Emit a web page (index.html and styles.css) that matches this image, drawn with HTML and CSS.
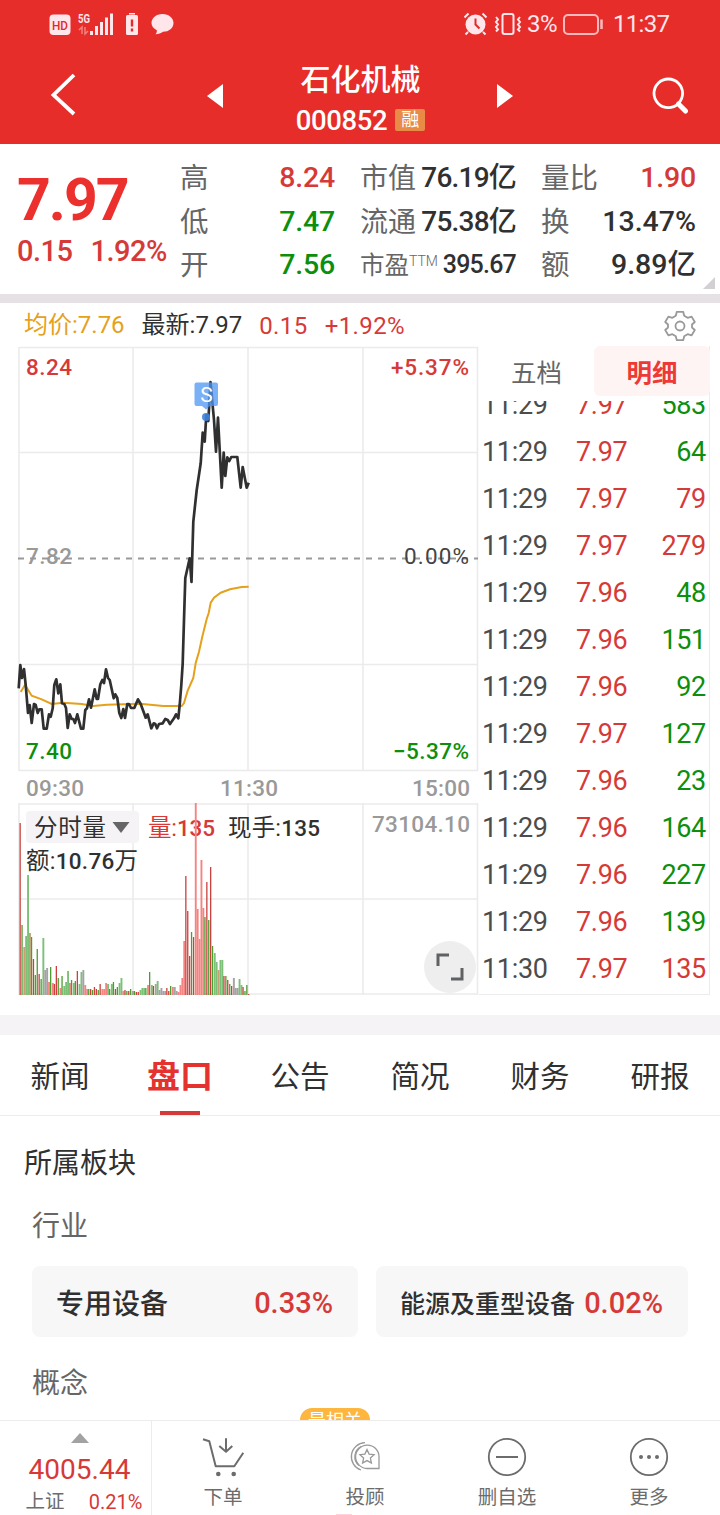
FILE: index.html
```html
<!DOCTYPE html>
<html lang="zh-CN">
<head>
  <meta charset="UTF-8">
  <meta name="viewport" content="width=device-width, initial-scale=1.0">
  <title>石化机械 000852</title>
  <link rel="stylesheet" href="styles.css">
</head>
<body>
  <header class="header">
    <div class="status-bar">
      <svg width="126" height="24" viewBox="49 12 126 24">
        <rect x="49.5" y="14.500" width="21" height="20.500" rx="4" fill="#ffe6ea"/>
        <text x="52" y="30" class="hd" textLength="16" lengthAdjust="spacingAndGlyphs">HD</text>
        <text x="78" y="23" class="five-g" textLength="12" lengthAdjust="spacingAndGlyphs">5G</text>
        <path d="M79 30l3-3v7M85 27v7l3-3" fill="none" stroke="#f2817f" stroke-width="1.500"/>
        <path d="M91.500 31v4M96.500 26v9M101.500 22v13M106.500 17.500v17.500M111.500 13.500v21.500" stroke="#ffe6ea" stroke-width="3"/>
        <path d="M129 13h6v1.500h-6z" fill="#ffe6ea"/>
        <rect x="126" y="15" width="12" height="20" rx="1.500" fill="#ffe6ea"/>
        <path d="M132 19.500v7M132 28.500v3" stroke="#e02b2a" stroke-width="2.400"/>
        <path d="M162.500 14c6.500 0 11 4 11 9s-4.500 8.800-10.500 8.800c-2 1.500-4.500 2.400-7.500 2.400 1.200-1.200 1.500-2.500 1.300-4-3.200-1.700-5.300-4-5.300-7.200 0-5 4.500-9 11-9z" fill="#ffe6ea"/>
      </svg>
      <div class="status-right">
        <svg width="58" height="24" viewBox="464 12 58 24" fill="none" stroke="#ffe6ea">
          <circle cx="475.500" cy="24.500" r="10" fill="#ffe6ea" stroke="none"/>
          <path d="M464.500 17.500l4-4M486.500 17.500l-4-4M468 32l-2.500 2.500M483 32l2.500 2.500" stroke-width="2"/>
          <path d="M475.500 18.500v6l4 4" stroke="#e02b2a" stroke-width="2"/>
          <rect x="502.500" y="14" width="11" height="20" rx="2" stroke-width="2"/>
          <path d="M496 17l2 2.500-2 2.500 2 2.500-2 2.500 2 2.500-2 2M520 17l-2 2.500 2 2.500-2 2.500 2 2.500-2 2.500 2 2" stroke-width="2"/>
        </svg>
        <span class="percent">3%</span>
        <svg width="41" height="24" viewBox="563 12 41 24">
          <rect x="564" y="15" width="34" height="19" rx="4" fill="none" stroke="#ffb9bc" stroke-width="2"/>
          <path d="M601.500 19.500v9.500" stroke="#ffb9bc" stroke-width="2.500"/>
        </svg>
        <span class="clock">11:37</span>
      </div>
    </div>
    <div class="title-bar">
      <svg class="back" width="28" height="46" viewBox="50 72 28 46"><path d="M74 75L53.500 95 74 114" fill="none" stroke="#fff" stroke-width="3.800"/></svg>
      <svg width="16" height="24" viewBox="0 0 16 24"><path d="M0 12L16 0v24z" fill="#fff"/></svg>
      <div class="stock">
        <div class="stock-name">石化机械</div>
        <div class="stock-code">000852<span class="tag">融</span></div>
      </div>
      <svg class="next" width="16" height="24" viewBox="0 0 16 24"><path d="M16 12L0 0v24z" fill="#fff"/></svg>
      <svg width="36" height="38" viewBox="652 77 36 38" fill="none" stroke="#fff">
        <circle cx="668.300" cy="93.300" r="14.300" stroke-width="2.800"/>
        <path d="M678.500 104l7 7" stroke-width="5" stroke-linecap="round"/>
      </svg>
    </div>
  </header>

  <section class="quote">
    <div>
      <div class="price">7.97</div>
      <div class="change"><span>0.15</span><span>1.92%</span></div>
    </div>
    <dl class="stats">
      <div><dt>高</dt><dd class="up">8.24</dd></div>
      <div><dt>低</dt><dd class="down">7.47</dd></div>
      <div><dt>开</dt><dd class="down">7.56</dd></div>
    </dl>
    <dl class="stats stats-cap">
      <div><dt>市值</dt><dd>76.19亿</dd></div>
      <div><dt>流通</dt><dd>75.38亿</dd></div>
      <div class="pe"><dt>市盈<sup>TTM</sup></dt><dd>395.67</dd></div>
    </dl>
    <dl class="stats">
      <div><dt>量比</dt><dd class="up">1.90</dd></div>
      <div><dt>换</dt><dd>13.47%</dd></div>
      <div><dt>额</dt><dd>9.89亿</dd></div>
    </dl>
    <i class="corner"></i>
  </section>

  <div class="legend">
    <span class="avg">均价:7.76</span>
    <span>最新:7.97</span>
    <span class="up">0.15</span>
    <span class="up">+1.92%</span>
    <svg class="gear" width="32" height="32" viewBox="-1 -1 32 32" fill="none" stroke="#999" stroke-width="1.800" stroke-linejoin="round">
      <path d="M11.800.8L18.200.8 19.200 4.800 22.600 6.800 26.600 5.600 29.800 11 27 13.500 27 16.500 29.800 19 26.600 24.400 22.600 23.200 19.200 25.200 18.200 29.200 11.800 29.200 10.800 25.200 7.400 23.200 3.400 24.400 .2 19 3 16.500 3 13.500 .2 11 3.400 5.600 7.400 6.800 10.800 4.800z"/>
      <circle cx="15" cy="15" r="4.500"/>
    </svg>
  </div>

  <section class="market">
    <svg class="chart" width="479" height="650" viewBox="0 346 479 650">
      <!-- grid -->
      <path class="grid" d="M19 347.500H478M19 452.500H478M19 664.500H478M19 770.500H478M19 804H478M19 899H478M19 994H478"/>
      <path class="grid" d="M19 347V771M133 347V771M248 347V771M363 347V771M477.500 347V771M19 803V995M133 803V995M248 803V995M363 803V995M477.500 803V995"/>
      <path d="M18 558.500H478" stroke="#999" stroke-width="1.800" stroke-dasharray="6 6"/>

      <!-- axis labels -->
      <text class="label up" x="26" y="375" textLength="46">8.24</text>
      <text class="label up" x="391" y="375" textLength="78">+5.37%</text>
      <text class="label muted" x="26" y="564" textLength="46">7.82</text>
      <text class="label zero" x="404" y="564" textLength="65">0.00%</text>
      <text class="label down" x="26" y="759" textLength="46">7.40</text>
      <text class="label down" x="393" y="759" textLength="76">−5.37%</text>
      <text class="label muted" x="26" y="796" textLength="58">09:30</text>
      <text class="label muted" x="220" y="796" textLength="58">11:30</text>
      <text class="label muted" x="412" y="796" textLength="58">15:00</text>

      <!-- volume head -->
      <rect x="26" y="811" width="113" height="32" rx="4" fill="#f6f3f6"/>
      <text class="label cn" x="34" y="836" textLength="72">分时量</text>
      <path d="M112.500 822h17l-8.500 11z" fill="#666"/>
      <text class="label cn up" x="148" y="836" textLength="67">量:<tspan class="num">135</tspan></text>
      <text class="label cn" x="228" y="836" textLength="92">现手:<tspan class="num">135</tspan></text>
      <text class="label cn" x="26" y="869" textLength="112">额:<tspan class="num">10.76</tspan>万</text>
      <text class="label muted" x="372" y="832" textLength="98">73104.10</text>
      <g id="volume"></g>

      <!-- average and price lines -->
      <polyline fill="none" stroke="#e5a11c" stroke-width="2" points="20.7,692 25,685 31.7,695.7 41.7,699.3 51.7,704 63.3,702.7 81.7,704 93.3,706 106.7,704.7 140,703.7 163.3,706 181.7,706 184,703 187.7,690.7 193.3,678 195.7,663 199,651.7 202.3,636.7 206.7,619 208.7,613 210.7,602.7 214,597.7 220.7,592.7 230,589.3 241.7,587 248.7,586.7"/>
      <polyline fill="none" stroke="#303030" stroke-width="2.700" stroke-linejoin="round" points="18.7,688.3 20.3,665 22,678 24,669 25.7,685 28,713 29.7,705 31.7,723 34,704 35.7,705 37.7,713 39.3,709.3 41.7,709.3 43.7,728.7 46.7,728.7 49,714.3 50.7,716.7 52.7,708.3 54.3,685 56.3,679.3 58.3,693.3 60.3,684.3 62,703.3 64.3,704 66,708 67.7,728 69.7,714.3 71.7,719 73.3,719 75,723 77.3,714.3 81,728.7 83.3,728.7 85.3,710 87,708.3 89,699.3 91,707.7 94.7,689.3 96.7,699 98,699 100.3,684.3 102.3,680 104,683 106,669.3 108,678 109.7,680 113.7,698.3 115.3,694.3 117.3,698 119.3,713 121.3,718 123.3,709 125,718 127.3,704 129,704 131,708 134.3,708 138,699.3 140.7,704 145.7,717.7 147.7,714.3 151.3,728.3 153.7,723.3 155.3,724 157,728.3 159,724 162.7,723.3 165.3,719 167.7,720 170,724 174,718.3 176,714.3 178.3,718.3 179.7,705 181.3,685 182.7,663.3 184,620 185.3,578 189.7,558.3 191.5,582 193.3,521.7 196.7,490 200.7,463.3 202.7,432.7 204.7,441.7 206.3,415 208.3,421 210.5,382 214,420 216,451.7 218,417.7 221.7,487.7 223.7,452.7 225.3,476 227.3,457.3 229.3,461 231.3,457 237.3,457 240.7,487.7 242.7,467 246.7,487.7 248.7,482.700"/>

      <!-- sell marker -->
      <path d="M196.500 382.500h19.500a2 2 0 0 1 2 2v19.500a2 2 0 0 1-2 2h-6l-4 3.500-4-3.500h-5.500a2 2 0 0 1-2-2v-19.500a2 2 0 0 1 2-2z" fill="#4e97f3" fill-opacity=".75"/>
      <circle cx="206" cy="417" r="4" fill="#3f83d8" fill-opacity=".9"/>
      <text class="marker" x="206.500" y="402" text-anchor="middle">S</text>

      <!-- full screen button -->
      <circle cx="450" cy="967" r="26" fill="#efeeef"/>
      <path d="M438 966v-11h11M462 968v11h-11" fill="none" stroke="#5f6163" stroke-width="3"/>
    </svg>

    <aside class="ticks">
      <div class="tick-tabs">
        <span>五档</span>
        <span class="active">明细</span>
      </div>
      <div class="tick-list" id="tickList"></div>
    </aside>
  </section>

  <nav class="tabs">
    <span>新闻</span>
    <span class="active">盘口</span>
    <span>公告</span>
    <span>简况</span>
    <span>财务</span>
    <span>研报</span>
  </nav>

  <main class="sectors">
    <h2>所属板块</h2>
    <h3>行业</h3>
    <div class="cards">
      <div class="card"><span>专用设备</span><b>0.33%</b></div>
      <div class="card card-long"><span>能源及重型设备</span><b>0.02%</b></div>
    </div>
    <h3 class="concept">概念</h3>
    <span class="badge">最相关</span>
  </main>

  <footer class="bottom-bar">
    <div class="index">
      <i class="arrow-up"></i>
      <div class="index-value">4005.44</div>
      <div class="index-name"><span>上证</span><span class="up">0.21%</span></div>
    </div>
    <div class="action">
      <svg width="42" height="40" viewBox="0 0 42 40" fill="none" stroke="#6c6c6c" stroke-width="2" stroke-linejoin="round">
        <path d="M1 2.300L7.300 4.300 13.700 29.300H32.300L41.300 15.700M24 1.300V14.700M17.300 9L24 14.700 30.300 9"/>
        <circle cx="16.300" cy="37" r="2.300" fill="#6c6c6c" stroke="none"/>
        <circle cx="31.700" cy="37" r="2.300" fill="#6c6c6c" stroke="none"/>
      </svg>
      <span>下单</span>
    </div>
    <div class="action adviser">
      <svg width="30" height="40" viewBox="350 1437 30 40" fill="none" stroke="#999" stroke-width="1.300">
        <path d="M379 1468.500H367a11.700 11.700 0 1 1 12-11.700z"/>
        <path d="M365 1442.700a14 14 0 0 0-4 27.300M361 1446.500a11.500 11.500 0 0 0-2 19"/>
        <path d="M367 1449.500l2.100 4.600 5 .6-3.700 3.400 1 5-4.400-2.500-4.400 2.500 1-5-3.700-3.400 5-.6z"/>
      </svg>
      <span>投顾</span>
    </div>
    <div class="action">
      <svg width="40" height="40" viewBox="0 0 40 40" fill="none" stroke="#6c6c6c" stroke-width="1.800">
        <circle cx="20" cy="20" r="18.200"/>
        <path d="M9 20h22" stroke-width="2"/>
      </svg>
      <span>删自选</span>
    </div>
    <div class="action">
      <svg width="40" height="40" viewBox="0 0 40 40" fill="#6c6c6c">
        <circle cx="20" cy="20" r="18.200" fill="none" stroke="#6c6c6c" stroke-width="1.800"/>
        <circle cx="12" cy="20" r="2"/><circle cx="20" cy="20" r="2"/><circle cx="28" cy="20" r="2"/>
      </svg>
      <span>更多</span>
    </div>
  </footer>

  <script>
    // time, price, volume, direction of the trade
    const ticks = [
      ['11:29', '7.97', 583, 'down'],
      ['11:29', '7.97', 64, 'down'],
      ['11:29', '7.97', 79, 'up'],
      ['11:29', '7.97', 279, 'up'],
      ['11:29', '7.96', 48, 'down'],
      ['11:29', '7.96', 151, 'down'],
      ['11:29', '7.96', 92, 'down'],
      ['11:29', '7.97', 127, 'down'],
      ['11:29', '7.96', 23, 'down'],
      ['11:29', '7.96', 164, 'down'],
      ['11:29', '7.96', 227, 'down'],
      ['11:29', '7.96', 139, 'down'],
      ['11:30', '7.97', 135, 'up']
    ];
    document.getElementById('tickList').innerHTML = ticks.map(([time, price, vol, dir]) => `
      <div class="tick">
        <span>${time}</span>
        <span class="up">${price}</span>
        <span class="${dir}">${vol}</span>
      </div>
    `).join('');

    // one bar per minute: height + colour key
    const colors = { r: '#c9403e', R: '#f48482', g: '#4c9c30', G: '#7cc077', t: '#c99f77', k: '#a5a1a5' };
    const volume = ('172r 70g 48t 59G 120G 62t 58g 36r 20g 46g 21r 16g 57G 25k 27k 13R 28g 12R 11r 29r 17g 7R 19g 9G 13G ' +
      '24G 12R 15g 12G 14g 24r 11G 23G 25k 10R 6R 6g 6r 5g 8r 6r 5g 11r 6R 6R 12R 11G 6g 11G 13g 6r 8g 12G 17G 4R ' +
      '5r 4g 4r 6g 4k 4g 3r 3r 5G 7G 7G 7g 10R 23g 10G 9r 11k 14G 5k 7k 4k 4k 7r 4r 9g 8R 8k 4k 3R 10R 17R 54R 119r 84r ' +
      '39r 63g 58r 192R 86R 56R 135R 87R 78g 113r 75g 128r 49g 42G 33G 25t 35G 35G 19r 19g 15r 11g 9r 17k 7k 7k 16G 10G 8r 4g 10g 1r').split(' ');
    const step = 228.6 / (volume.length - 1);
    document.getElementById('volume').innerHTML = volume.map((item, i) => {
      const h = parseInt(item);
      const key = item.slice(-1);
      const w = key === 'r' || key === 'g' ? 1.3 : 1.9;
      return `<rect x="${(19.5 + i * step).toFixed(1)}" y="${995 - h}" width="${w}" height="${h}" fill="${colors[key]}"/>`;
    }).join('');
  </script>
</body>
</html>
```
FILE: styles.css
```css
* {
  box-sizing: border-box;
}
body {
  display: flex;
  flex-direction: column;
  width: 720px;
  height: 1515px;
  margin: 0;
  overflow: hidden;
  background: #fff;
  color: #303030;
  font-family: Roboto, "Noto Sans CJK SC", sans-serif;
}
svg {
  display: block;
  flex: none;
}
dl, dd, h2, h3 {
  margin: 0;
}

/* header */
.header {
  flex: none;
  height: 144px;
  background: #e62d2a;
  color: #fff;
}
.status-bar {
  display: flex;
  justify-content: space-between;
  align-items: center;
  height: 48px;
  padding: 0 51px 0 49px;
  color: #ffe6ea;
  font-size: 24px;
}
.status-right {
  display: flex;
  align-items: center;
}
.percent {
  width: 36px;
  margin-left: 5px;
  letter-spacing: -0.5px;
}
.clock {
  width: 56px;
  margin-left: 9px;
  letter-spacing: -0.7px;
  white-space: nowrap;
}
.hd {
  fill: #e02b2a;
  font-size: 13px;
  font-weight: 500;
}
.five-g {
  fill: #ffe6ea;
  font-size: 12.5px;
  font-weight: 700;
}
.title-bar {
  display: grid;
  grid-template-columns: 207px 89px 129px 72px 155px 36px;
  align-items: center;
  height: 96px;
}
.back {
  margin-left: 50px;
  margin-top: -2px;
}
.next {
  grid-column: 5;
}
.stock {
  display: flex;
  flex-direction: column;
  align-items: center;
  padding-top: 6px;
}
.stock-name {
  height: 42px;
  font-size: 30px;
  font-weight: 500;
  line-height: 40px;
}
.stock-code {
  display: flex;
  align-items: center;
  height: 36px;
  font-size: 27.5px;
  font-weight: 500;
  letter-spacing: -0.4px;
}
.tag {
  width: 30px;
  height: 22px;
  margin-left: 8px;
  border-radius: 2px;
  background: #e88b46;
  font-size: 18px;
  font-weight: 400;
  letter-spacing: 0;
  line-height: 22px;
  text-align: center;
}

/* quote */
.quote {
  position: relative;
  display: grid;
  flex: none;
  grid-template-columns: 138px 155px 156px 155px;
  column-gap: 25px;
  height: 159px;
  padding: 12px 0 0 17px;
  border-bottom: 9px solid #e5e1e5;
}
.price {
  height: 76px;
  color: #ec302d;
  font-size: 59px;
  font-weight: 700;
  letter-spacing: -2px;
  line-height: 88px;
}
.change {
  display: flex;
  gap: 18px;
  color: #d63a38;
  font-size: 29px;
  font-weight: 500;
  letter-spacing: -0.5px;
  line-height: 38px;
}
.stats > div {
  display: flex;
  justify-content: space-between;
  height: 43.5px;
  line-height: 44px;
  white-space: nowrap;
}
.stats dt {
  padding-top: 1px;
  color: #666;
  font-size: 28.5px;
}
.stats dd {
  font-size: 28.5px;
  font-weight: 500;
}
.stats .up, .stats .down {
  letter-spacing: -0.2px;
}
.stats-cap dt {
  font-size: 28px;
}
.stats-cap dd {
  font-size: 28px;
  letter-spacing: -0.8px;
}
.stats .pe dt {
  font-size: 24.5px;
}
.stats .pe dd {
  font-size: 25px;
}
.pe sup {
  font-size: 14px;
  font-weight: 300;
  line-height: 0;
  vertical-align: 8px;
}
.corner {
  position: absolute;
  right: 5px;
  bottom: 5px;
  border-left: 12px solid transparent;
  border-bottom: 12px solid #d2d0d2;
}

/* chart */
.legend {
  display: flex;
  flex: none;
  align-items: center;
  gap: 17px;
  height: 43px;
  padding: 0 24px;
  font-size: 24px;
  line-height: 45px;
}
.legend span {
  height: 43px;
}
.legend .up {
  line-height: 46px;
  letter-spacing: 0.4px;
}
.avg {
  color: #e5a11c;
}
.gear {
  margin-left: auto;
  margin-top: 3px;
}
.market {
  display: flex;
  flex: none;
  height: 669px;
}
.grid {
  fill: none;
  stroke: #ebebeb;
  stroke-width: 1.6;
}
.label {
  fill: #303030;
  font-size: 22.5px;
  font-weight: 500;
}
.cn {
  font-size: 23.5px;
  font-weight: 400;
}
.num {
  font-size: 22.5px;
  font-weight: 500;
}
.muted {
  fill: #999;
}
.zero {
  fill: #444;
  font-weight: 400;
}
.marker {
  fill: #fff;
  font-size: 21px;
}
.ticks {
  width: 231px;
  height: 649px;
  border-right: 1px solid #ececec;
  border-bottom: 1px solid #ececec;
}
.tick-tabs {
  display: grid;
  grid-template-columns: 115px 116px;
  height: 55px;
  color: #666;
  font-size: 25.5px;
  line-height: 54px;
  text-align: center;
}
.tick-tabs .active {
  height: 50px;
  border-radius: 6px;
  background: #fff4f4;
  color: #ee3a36;
  font-weight: 700;
}
/* list is scrolled to the end, first row is cut */
.tick-list {
  display: flex;
  flex-direction: column;
  justify-content: flex-end;
  height: 592px;
  overflow: hidden;
}
.tick {
  display: grid;
  flex: none;
  grid-template-columns: 94px 60px 1fr;
  height: 47px;
  padding: 0 3px;
  color: #4c4c4c;
  font-size: 27px;
  letter-spacing: -0.3px;
  line-height: 47px;
}
.tick span:last-child {
  text-align: right;
}

.up {
  color: #d63a38;
  fill: #d63a38;
}
.down {
  color: #0c8f0c;
  fill: #0c8f0c;
}

/* tabs */
.tabs {
  display: grid;
  flex: none;
  grid-template-columns: repeat(6, 120px);
  height: 101px;
  border-top: 20px solid #f6f3f7;
  border-bottom: 1px solid #ececec;
  font-size: 29.5px;
  line-height: 84px;
  text-align: center;
}
.tabs .active {
  display: flex;
  flex-direction: column;
  align-items: center;
  height: 80px;
  color: #e4322f;
  font-size: 33px;
  font-weight: 700;
}
.tabs .active::after {
  content: "";
  width: 40px;
  height: 4px;
  margin-top: -8px;
  background: #d63a38;
}

/* sectors */
.sectors {
  position: relative;
  flex: none;
  height: 304px;
  padding: 27px 32px 0;
  overflow: hidden;
}
.sectors h2 {
  height: 63px;
  margin-left: -8px;
  font-size: 28px;
  font-weight: 400;
  line-height: 42px;
}
.sectors h3 {
  height: 60px;
  color: #666;
  font-size: 28px;
  font-weight: 400;
  line-height: 42px;
}
.cards {
  display: grid;
  grid-template-columns: 326px 312px;
  gap: 18px;
  height: 71px;
}
.card {
  display: flex;
  justify-content: space-between;
  align-items: center;
  padding: 0 25px 0 24px;
  border-radius: 8px;
  background: #f7f7f8;
  font-size: 28px;
  white-space: nowrap;
}
.card b {
  padding-top: 2px;
  color: #d63a38;
  font-size: 29px;
  font-weight: 500;
}
.card span {
  font-weight: 500;
}
.card-long span {
  font-size: 25px;
}
.sectors .concept {
  margin-top: 26px;
}
.badge {
  position: absolute;
  left: 300px;
  top: 292px;
  width: 70px;
  height: 24px;
  border-radius: 12px;
  background: #ffb63e;
  color: #fff;
  font-size: 18px;
  line-height: 26px;
  text-align: center;
}

/* bottom bar */
.bottom-bar {
  display: grid;
  flex: none;
  grid-template-columns: 152px repeat(4, 142px);
  height: 95px;
  border-top: 1px solid #ececec;
  color: #6c6c6c;
  font-size: 19.5px;
}
.index {
  display: flex;
  flex-direction: column;
  align-items: center;
  padding: 12px 0 0 8px;
  border-right: 1px solid #ececec;
}
.arrow-up {
  border: 9px solid transparent;
  border-top: 0;
  border-bottom: 10px solid #a3a1a3;
}
.index-value {
  height: 52px;
  color: #d63a38;
  font-size: 28px;
  line-height: 54px;
}
.index-name {
  display: flex;
  justify-content: space-between;
  width: 117px;
  margin-left: 9px;
  line-height: 14px;
}
.index-name .up {
  font-size: 20px;
}
.action {
  display: flex;
  flex-direction: column;
  align-items: center;
  padding-top: 16px;
}
.action span {
  height: 38px;
  line-height: 42px;
}
.adviser {
  position: relative;
}
.adviser::after {
  content: "";
  position: absolute;
  left: 42px;
  bottom: 0;
  width: 16px;
  height: 1px;
  background: #fbd5dc;
}
```
